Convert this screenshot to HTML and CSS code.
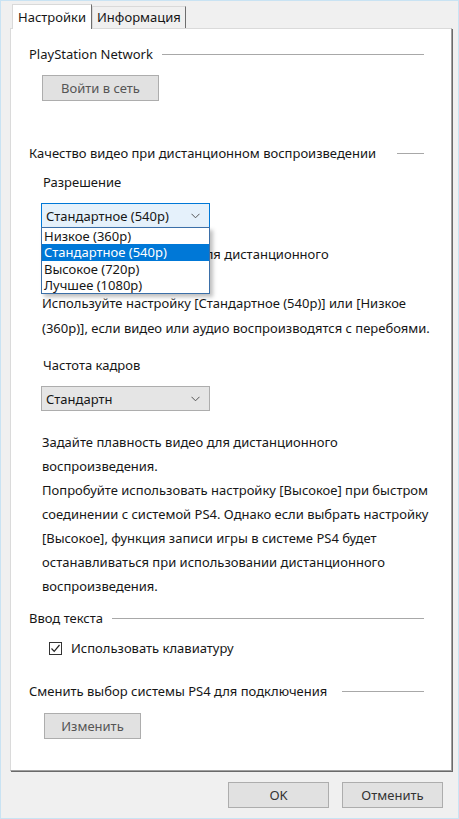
FILE: index.html
```html
<!DOCTYPE html>
<html lang="ru">
<head>
<meta charset="utf-8">
<title>Настройки</title>
<link rel="stylesheet" href="styles.css">
</head>
<body>
<div class="window">
  <div class="tabs">
    <div class="tab active">Настройки</div>
    <div class="tab">Информация</div>
  </div>
  <div class="panel">
    <div class="group-title"><span>PlayStation Network</span><i class="rule"></i></div>
    <div class="btn btn-login">Войти в сеть</div>

    <div class="group-title gt-video"><span>Качество видео при дистанционном воспроизведении</span><i class="rule"></i></div>
    <div class="sub">
      <div class="label">Разрешение</div>
      <div class="combo-wrap">
        <div class="combo open"><span>Стандартное (540p)</span>
          <svg class="chev" width="9" height="6" viewBox="0 0 9 6"><polyline points="0.5,0.8 4.5,4.8 8.5,0.8" fill="none" stroke="#555" stroke-width="1"/></svg>
        </div>
        <ul class="dropdown">
          <li>Низкое (360p)</li>
          <li class="sel">Стандартное (540p)</li>
          <li>Высокое (720p)</li>
          <li>Лучшее (1080p)</li>
        </ul>
      </div>
      <p class="desc d1">Задайте качество видео для дистанционного<br>воспроизведения.<br>Используйте настройку [Стандартное (540p)] или [Низкое<br>(360p)], если видео или аудио воспроизводятся с перебоями.</p>

      <div class="label l2">Частота кадров</div>
      <div class="combo"><span>Стандартн</span>
        <svg class="chev" width="9" height="6" viewBox="0 0 9 6"><polyline points="0.5,0.8 4.5,4.8 8.5,0.8" fill="none" stroke="#555" stroke-width="1"/></svg>
      </div>
      <p class="desc d2">Задайте плавность видео для дистанционного<br>воспроизведения.<br>Попробуйте использовать настройку [Высокое] при быстром<br>соединении с системой PS4. Однако если выбрать настройку<br>[Высокое], функция записи игры в системе PS4 будет<br>останавливаться при использовании дистанционного<br>воспроизведения.</p>
    </div>

    <div class="group-title gt-text"><span>Ввод текста</span><i class="rule"></i></div>
    <label class="check">
      <span class="box"><svg width="11" height="11" viewBox="0 0 11 11"><polyline points="1.5,5.5 4.2,8.3 9.5,2" fill="none" stroke="#222" stroke-width="1.2"/></svg></span>
      <span>Использовать клавиатуру</span>
    </label>

    <div class="group-title gt-ps4"><span>Сменить выбор системы PS4 для подключения</span><i class="rule"></i></div>
    <div class="btn btn-change">Изменить</div>
  </div>
  <div class="footer">
    <div class="btn btn-ok">OK</div>
    <div class="btn btn-cancel">Отменить</div>
  </div>
</div>
</body>
</html>
```

FILE: styles.css
```css
* { box-sizing: border-box; }
html, body { margin: 0; padding: 0; }
body {
  background: #f0f0f0;
  font-family: "Noto Sans", "Open Sans", "DejaVu Sans", sans-serif;
  font-size: 13px;
  color: #161616;
}
.window {
  width: 459px;
  height: 819px;
  border: 1px solid #c9e3f3;
  background: #f0f0f0;
  position: relative;
}
.tabs {
  display: flex;
  padding-left: 11px;
  padding-top: 2px;
  height: 27px;
  align-items: flex-end;
}
.tab {
  height: 22px;
  line-height: 20px;
  padding: 0 4px 0 4px;
  border-left: 1px solid #d9d9d9;
  border-top: 1px solid #d9d9d9;
  border-right: 1px solid #6e6e6e;
  background: #f0f0f0;
}
.tab.active {
  height: 25px;
  background: #ffffff;
  padding: 0 5px 0 5px;
  line-height: 24px;
  position: relative;
  z-index: 2;
  margin-bottom: -1px;
}
.panel {
  margin-left: 9px;
  width: 442px;
  height: 743px;
  background: #fff;
  border-left: 1px solid #dadada;
  border-top: 1px solid #dadada;
  border-right: 1px solid #a0a0a0;
  border-bottom: 1px solid #a0a0a0;
  box-shadow: 1px 1px 0 #6a6a6a;
  padding: 16px 0 0 18px;
  position: relative;
}
.group-title {
  display: flex;
  align-items: center;
  height: 18px;
  line-height: 18px;
  padding-right: 27px;
}
.group-title span { white-space: nowrap; }
.rule {
  flex: 1;
  height: 1px;
  background: #a8a8a8;
  margin-left: 9px;
}
.gt-video .rule { margin-left: 21px; }
.gt-ps4 .rule { margin-left: 15px; }
.btn {
  background: #e1e1e1;
  border: 1px solid #adadad;
  text-align: center;
  height: 26px;
  line-height: 24px;
  color: #333;
}
.btn-login {
  width: 117px;
  margin: 12px 0 0 13px;
  color: #555;
}
.gt-video { margin-top: 43px; }
.sub { padding-left: 12px; }
.label { margin-top: 11px; height: 18px; line-height: 18px; padding-left: 2px; }
.l2 { margin-top: 16px; }
.combo-wrap { position: relative; padding-top: 12px; }
.combo {
  margin-top: 12px;
  width: 169px;
  height: 25px;
  border: 1px solid #adadad;
  background: #e5e5e5;
  display: flex;
  align-items: center;
  justify-content: space-between;
  padding: 0 9px 0 4px;
}
.combo-wrap .combo { margin-top: 0; }
.combo.open {
  background: #e5f1fb;
  border-color: #0078d7;
}
.chev { display: block; }
.dropdown {
  position: absolute;
  left: 0;
  top: 36px;
  width: 169px;
  margin: 0;
  padding: 0;
  list-style: none;
  background: #fff;
  border: 1px solid #3b6fa8;
  box-shadow: 3px 3px 4px rgba(0,0,0,0.25);
  z-index: 5;
}
.dropdown li {
  height: 16.25px;
  line-height: 16px;
  padding-left: 2px;
  white-space: nowrap;
}
.dropdown li.sel {
  background: #0078d7;
  color: #fff;
}
.desc {
  margin: 0;
  line-height: 24.5px;
  padding-left: 1px;
}
.d1 { margin-top: 14px; }
.d2 { margin-top: 19px; line-height: 24px; }
.gt-text { margin-top: 11px; }
.check {
  display: flex;
  align-items: center;
  height: 18px;
  margin: 12px 0 0 20px;
}
.box {
  width: 13px;
  height: 13px;
  border: 1px solid #333;
  background: #fff;
  display: flex;
  align-items: center;
  justify-content: center;
  margin-right: 9px;
}
.gt-ps4 { margin-top: 25px; }
.btn-change {
  width: 97px;
  margin: 13px 0 0 15px;
  color: #555;
}
.footer {
  display: flex;
  justify-content: flex-end;
  gap: 13px;
  padding: 11px 15px 0 0;
}
.btn-ok { width: 101px; }
.btn-cancel { width: 101px; }
```
